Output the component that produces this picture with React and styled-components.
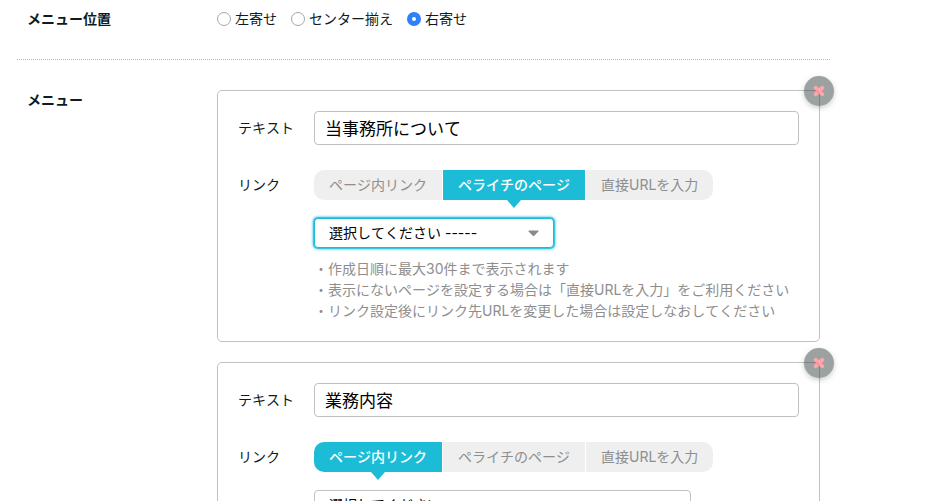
import React, { useState } from 'react';
import styled, { createGlobalStyle } from 'styled-components';

const POSITIONS = [
  { value: 'left', label: '左寄せ' },
  { value: 'center', label: 'センター揃え' },
  { value: 'right', label: '右寄せ' },
];

const LINK_TYPES = [
  { value: 'inner', label: 'ページ内リンク' },
  { value: 'page', label: 'ペライチのページ' },
  { value: 'url', label: '直接URLを入力' },
];

const MENUS = [
  { id: 1, text: '当事務所について', linkType: 'page' },
  { id: 2, text: '業務内容', linkType: 'inner' },
];

const MenuCard = ({ menu }) => {
  const [text, setText] = useState(menu.text);
  const [linkType, setLinkType] = useState(menu.linkType);
  const isPage = linkType === 'page';

  return (
    <Card>
      <DeleteButton type="button" aria-label="削除">
        <svg width="12" height="12" viewBox="0 0 12 12">
          <path d="M2.8 2.8 9.2 9.2M9.2 2.8 2.8 9.2" />
        </svg>
      </DeleteButton>

      <FieldLabel htmlFor={`text-${menu.id}`} $height="34px">
        テキスト
      </FieldLabel>
      <TextInput
        id={`text-${menu.id}`}
        type="text"
        value={text}
        onChange={(e) => setText(e.target.value)}
      />

      <FieldLabel htmlFor={`link-${menu.id}`} $height="30px">
        リンク
      </FieldLabel>
      <div>
        <Tabs>
          {LINK_TYPES.map((type) => (
            <Tab
              key={type.value}
              type="button"
              $active={linkType === type.value}
              onClick={() => setLinkType(type.value)}
            >
              {type.label}
            </Tab>
          ))}
        </Tabs>
        <SelectWrap $wide={!isPage}>
          <Select id={`link-${menu.id}`} $focused={isPage}>
            <option>選択してください -----</option>
          </Select>
          <Caret width="11" height="7" viewBox="0 0 11 7">
            <path d="M1 .5h9a.6.6 0 0 1 .4 1L6.2 5.7a1 1 0 0 1-1.4 0L.6 1.5A.6.6 0 0 1 1 .5z" />
          </Caret>
        </SelectWrap>
        {isPage && (
          <Notes>
            <li>・作成日順に最大30件まで表示されます</li>
            <li>・表示にないページを設定する場合は「直接URLを入力」をご利用ください</li>
            <li>・リンク設定後にリンク先URLを変更した場合は設定しなおしてください</li>
          </Notes>
        )}
      </div>
    </Card>
  );
};

const App = () => {
  const [position, setPosition] = useState('right');

  return (
    <>
      <GlobalStyle />
      <Page>
        <Section>
          <Heading>メニュー位置</Heading>
          <RadioList>
            {POSITIONS.map((item) => (
              <RadioLabel key={item.value}>
                <Radio
                  type="radio"
                  name="position"
                  checked={position === item.value}
                  onChange={() => setPosition(item.value)}
                />
                {item.label}
              </RadioLabel>
            ))}
          </RadioList>
        </Section>
        <Section>
          <Heading>メニュー</Heading>
          <CardList>
            {MENUS.map((menu) => (
              <MenuCard key={menu.id} menu={menu} />
            ))}
          </CardList>
        </Section>
      </Page>
    </>
  );
};

export default App;

const GlobalStyle = createGlobalStyle`
  * {
    box-sizing: border-box;
  }

  body {
    margin: 0;
    background: #fff;
    color: #0e1c1f;
    font-family: Inter, 'Noto Sans CJK JP', sans-serif;
    font-size: 14px;
    font-kerning: none;
    line-height: 20px;
  }

  button, input, select {
    margin: 0;
    font-family: inherit;
    font-size: inherit;
    font-kerning: inherit;
  }
`;

const Page = styled.main`
  height: 100vh;
  overflow: hidden;
  padding: 0 108px 0 17px;
`;

const Section = styled.section`
  display: grid;
  grid-template-columns: 190px 1fr;
  padding: 30px 10px;

  &:first-child {
    padding-top: 9px;
  }

  & + & {
    border-top: 1px dotted #b4b8b8;
  }
`;

const Heading = styled.h2`
  margin: 0;
  font-size: 14px;
  font-weight: bold;
  line-height: 20px;
`;

const RadioList = styled.div`
  display: flex;
  gap: 14px;
`;

const RadioLabel = styled.label`
  display: flex;
  align-items: center;
  gap: 4px;
`;

const Radio = styled.input`
  appearance: none;
  width: 14px;
  height: 14px;
  border: 1px solid #a6a6a6;
  border-radius: 50%;
  background: #fff;

  &:checked {
    border: 5px solid #2f80fb;
  }
`;

const CardList = styled.div`
  display: grid;
  gap: 20px;
`;

const Card = styled.div`
  position: relative;
  display: grid;
  grid-template-columns: 76px 1fr;
  row-gap: 25px;
  padding: 20px;
  border: 1px solid #bfc1c1;
  border-radius: 5px;
`;

const DeleteButton = styled.button`
  position: absolute;
  top: -15px;
  right: -15px;
  display: flex;
  align-items: center;
  justify-content: center;
  width: 30px;
  height: 30px;
  padding: 0;
  border: 0;
  border-radius: 50%;
  background: #3c4846;
  box-shadow: 0 2px 5px rgba(0, 0, 0, 0.4);
  opacity: 0.5;
  cursor: pointer;

  path {
    stroke: #ff4f57;
    stroke-width: 4;
    stroke-linecap: round;
  }
`;

const FieldLabel = styled.label`
  height: ${({ $height }) => $height};
  line-height: ${({ $height }) => $height};
`;

const TextInput = styled.input`
  width: 100%;
  height: 34px;
  padding: 0 10px 2px;
  border: 1px solid #bfc1c1;
  border-radius: 4px;
  background: #fff;
  color: #000;
  font-size: 17px;
`;

const Tabs = styled.div`
  display: flex;
  gap: 1px;
`;

const Tab = styled.button`
  position: relative;
  height: 30px;
  padding: 0 15px;
  border: 0;
  background: ${({ $active }) => ($active ? '#1dbcd6' : '#efefef')};
  color: ${({ $active }) => ($active ? '#fff' : '#8e8e8e')};
  font-size: 14px;
  font-weight: ${({ $active }) => ($active ? 500 : 400)};
  line-height: 30px;
  white-space: nowrap;
  cursor: pointer;

  &:first-child {
    border-radius: 10px 0 0 10px;
  }

  &:last-child {
    border-radius: 0 10px 10px 0;
  }

  &::after {
    content: '';
    display: ${({ $active }) => ($active ? 'block' : 'none')};
    position: absolute;
    top: 100%;
    left: 50%;
    margin-left: -7px;
    border: 7px solid transparent;
    border-top: 8px solid #1dbcd6;
    border-bottom: 0;
  }
`;

const SelectWrap = styled.div`
  position: relative;
  width: ${({ $wide }) => ($wide ? '377px' : '240px')};
  margin-top: 18px;
`;

const Select = styled.select`
  appearance: none;
  display: block;
  width: 100%;
  height: 30px;
  padding: 0 30px 2px 14px;
  border: 1px solid ${({ $focused }) => ($focused ? '#1dbcd6' : '#bfc1c1')};
  border-radius: 4px;
  background: #fff;
  box-shadow: ${({ $focused }) => ($focused ? '0 0 0 1px #3cc6dc, 0 0 3px 1px #1dbcd6' : 'none')};
  color: #000;
  outline: 0;
`;

const Caret = styled.svg`
  position: absolute;
  top: 12px;
  right: 15px;
  fill: #8a8a8a;
  pointer-events: none;
`;

const Notes = styled.ul`
  margin: 10px 0 0;
  padding: 0;
  color: #8e8e8e;
  line-height: 21px;
  list-style: none;
`;
